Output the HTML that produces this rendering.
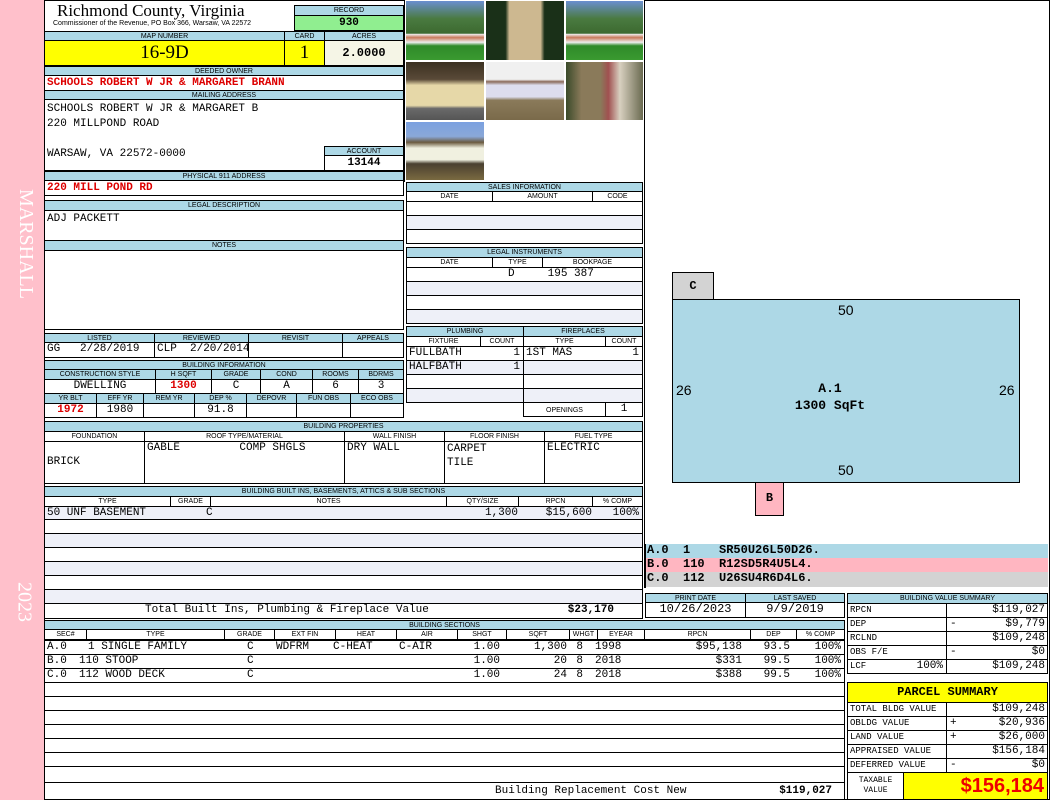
<!DOCTYPE html><html><head><style>
body{margin:0;width:1050px;height:800px;position:relative;background:#fff;overflow:hidden;font-family:"Liberation Mono",monospace}
div{position:absolute;box-sizing:border-box}
.b{border:1px solid #000;overflow:hidden;white-space:nowrap}
.h{background:#add8e6;font:7px/1 "Liberation Sans",sans-serif;text-align:center;padding-top:1px;border:1px solid #000;white-space:nowrap;overflow:hidden}
.w{background:#fff;font-size:11px;line-height:13px;padding:0 2px}
.g{background:#eef0f8}
.r{text-align:right}.c{text-align:center}
.red{color:#d00;font-weight:bold}
.ph{overflow:hidden;border:1px solid #fff}
.s{position:absolute;top:0}
.sr{position:absolute;top:0;text-align:right}
</style></head><body>
<div style="left:0;top:0;width:44px;height:800px;background:#ffc0cb"></div>
<div style="left:10px;top:175px;width:26px;height:140px;"><div style="left:-56px;top:56px;width:140px;height:26px;transform:rotate(90deg);color:#fff;font:20px 'Liberation Serif',serif;text-align:center">MARSHALL</div></div>
<div style="left:10px;top:575px;width:26px;height:55px;"><div style="left:-15px;top:14px;width:55px;height:26px;transform:rotate(90deg);color:#fff;font:20px 'Liberation Serif',serif;text-align:center">2023</div></div>
<div style="left:44px;top:0;width:1006px;height:800px;border:1px solid #000"></div>

<div style="left:57px;top:1px;font:17px 'Liberation Serif',serif">Richmond County, Virginia</div>
<div style="left:53px;top:20px;font:7px 'Liberation Sans',sans-serif">Commissioner of the Revenue, PO Box 366, Warsaw, VA 22572</div>
<div class="h" style="left:294px;top:5px;width:110px;height:11px">RECORD</div>
<div class="b c" style="left:294px;top:15px;width:110px;height:16px;background:#90ee90;font:bold 11px/14px 'Liberation Mono'">930</div>
<div class="h" style="left:44px;top:31px;width:241px;height:10px">MAP NUMBER</div>
<div class="h" style="left:284px;top:31px;width:41px;height:10px">CARD</div>
<div class="h" style="left:324px;top:31px;width:80px;height:10px">ACRES</div>
<div class="b c" style="left:44px;top:40px;width:241px;height:26px;background:#ff0;font:19px/24px 'Liberation Serif',serif">16-9D</div>
<div class="b c" style="left:284px;top:40px;width:41px;height:26px;background:#ff0;font:19px/24px 'Liberation Serif',serif">1</div>
<div class="b c" style="left:324px;top:40px;width:80px;height:26px;background:#f5f5e6;font:bold 12px/24px 'Liberation Mono'">2.0000</div>
<div class="h" style="left:44px;top:66px;width:360px;height:10px">DEEDED OWNER</div>
<div class="b w red" style="left:44px;top:75px;width:360px;height:16px;line-height:15px">SCHOOLS ROBERT W JR &amp; MARGARET BRANN</div>
<div class="h" style="left:44px;top:90px;width:360px;height:10px">MAILING ADDRESS</div>
<div class="b w" style="left:44px;top:99px;width:360px;height:72px;line-height:15px;white-space:pre;padding-top:2px">SCHOOLS ROBERT W JR &amp; MARGARET B
220 MILLPOND ROAD

WARSAW, VA 22572-0000</div>
<div class="h" style="left:324px;top:146px;width:80px;height:10px">ACCOUNT</div>
<div class="b c" style="left:324px;top:155px;width:80px;height:16px;font:bold 11px/14px 'Liberation Mono'">13144</div>
<div class="h" style="left:44px;top:171px;width:360px;height:10px">PHYSICAL 911 ADDRESS</div>
<div class="b w red" style="left:44px;top:180px;width:360px;height:16px;line-height:15px">220 MILL POND RD</div>
<div class="h" style="left:44px;top:200px;width:360px;height:11px">LEGAL DESCRIPTION</div>
<div class="b w" style="left:44px;top:210px;width:360px;height:31px;padding-top:2px">ADJ PACKETT</div>
<div class="h" style="left:44px;top:240px;width:360px;height:11px">NOTES</div>
<div class="b" style="left:44px;top:250px;width:360px;height:80px"></div>

<div class="h" style="left:44px;top:333px;width:111px;height:10px">LISTED</div>
<div class="h" style="left:154px;top:333px;width:95px;height:10px">REVIEWED</div>
<div class="h" style="left:248px;top:333px;width:95px;height:10px">REVISIT</div>
<div class="h" style="left:342px;top:333px;width:62px;height:10px">APPEALS</div>
<div class="b w" style="left:44px;top:342px;width:111px;height:16px">GG&nbsp;&nbsp;&nbsp;2/28/2019</div>
<div class="b w" style="left:154px;top:342px;width:95px;height:16px">CLP&nbsp;&nbsp;2/20/2014</div>
<div class="b w" style="left:248px;top:342px;width:95px;height:16px"></div>
<div class="b w" style="left:342px;top:342px;width:62px;height:16px"></div>

<div class="h" style="left:44px;top:360px;width:360px;height:10px">BUILDING INFORMATION</div>
<div class="h" style="left:44px;top:369px;width:112px;height:11px">CONSTRUCTION STYLE</div>
<div class="h" style="left:155px;top:369px;width:57px;height:11px">H SQFT</div>
<div class="h" style="left:211px;top:369px;width:50px;height:11px">GRADE</div>
<div class="h" style="left:260px;top:369px;width:53px;height:11px">COND</div>
<div class="h" style="left:312px;top:369px;width:47px;height:11px">ROOMS</div>
<div class="h" style="left:358px;top:369px;width:46px;height:11px">BDRMS</div>
<div class="b w c" style="left:44px;top:379px;width:112px;height:15px">DWELLING</div>
<div class="b w c red" style="left:155px;top:379px;width:57px;height:15px">1300</div>
<div class="b w c" style="left:211px;top:379px;width:50px;height:15px">C</div>
<div class="b w c" style="left:260px;top:379px;width:53px;height:15px">A</div>
<div class="b w c" style="left:312px;top:379px;width:47px;height:15px">6</div>
<div class="b w c" style="left:358px;top:379px;width:46px;height:15px">3</div>
<div class="h" style="left:44px;top:393px;width:53px;height:11px">YR BLT</div>
<div class="h" style="left:96px;top:393px;width:48px;height:11px">EFF YR</div>
<div class="h" style="left:143px;top:393px;width:52px;height:11px">REM YR</div>
<div class="h" style="left:194px;top:393px;width:53px;height:11px">DEP %</div>
<div class="h" style="left:246px;top:393px;width:51px;height:11px">DEPOVR</div>
<div class="h" style="left:296px;top:393px;width:55px;height:11px">FUN OBS</div>
<div class="h" style="left:350px;top:393px;width:54px;height:11px">ECO OBS</div>
<div class="b w c red" style="left:44px;top:403px;width:53px;height:15px">1972</div>
<div class="b w c" style="left:96px;top:403px;width:48px;height:15px">1980</div>
<div class="b w" style="left:143px;top:403px;width:52px;height:15px"></div>
<div class="b w c" style="left:194px;top:403px;width:53px;height:15px">91.8</div>
<div class="b w" style="left:246px;top:403px;width:51px;height:15px"></div>
<div class="b w" style="left:296px;top:403px;width:55px;height:15px"></div>
<div class="b w" style="left:350px;top:403px;width:54px;height:15px"></div>

<!-- photos -->
<div class="ph" style="left:405px;top:0;width:80px;height:61px;background:linear-gradient(#6a8fd0 0,#4a7a40 30%,#3c6a30 55%,#eee 56%,#c87a5a 62%,#eee 70%,#2f8a2a 76%,#3a9a30)"></div>
<div class="ph" style="left:485px;top:0;width:80px;height:61px;background:linear-gradient(90deg,#1a3018 0,#1a3018 25%,#cdb890 30%,#cdb890 70%,#1a3018 75%);"></div>
<div class="ph" style="left:565px;top:0;width:79px;height:61px;background:linear-gradient(#6a8fd0 0,#4a7a40 30%,#3c6a30 55%,#eee 56%,#c87a5a 62%,#eee 70%,#2f8a2a 76%,#3a9a30)"></div>
<div class="ph" style="left:405px;top:61px;width:80px;height:60px;background:linear-gradient(#3a3020 0,#5a4a38 30%,#e6d8a8 40%,#e6d8a8 75%,#6a6a6a 80%,#555)"></div>
<div class="ph" style="left:485px;top:61px;width:80px;height:60px;background:linear-gradient(#f0f0f0 0,#f0f0f0 30%,#8a6a5a 34%,#dde 40%,#dde 60%,#8a7a5a 66%,#7a6a4a)"></div>
<div class="ph" style="left:565px;top:61px;width:79px;height:60px;background:linear-gradient(90deg,#3a4a2a,#8a7a5a 20%,#8a7a5a 45%,#a05050 55%,#d8d0c0 70%,#6a6a50)"></div>
<div class="ph" style="left:405px;top:121px;width:80px;height:60px;background:linear-gradient(#7aa0e0 0,#8aa8d8 25%,#6a5a40 35%,#f0f0e0 45%,#f0f0e0 65%,#4a4030 72%,#7a6a40)"></div>
<div style="left:404px;top:0;width:1px;height:182px;background:#000"></div>
<div style="left:644px;top:0;width:1px;height:545px;background:#000"></div>

<!-- sales -->
<div class="h" style="left:406px;top:182px;width:237px;height:10px">SALES INFORMATION</div>
<div class="h" style="left:406px;top:191px;width:87px;height:11px;background:#fff">DATE</div>
<div class="h" style="left:492px;top:191px;width:101px;height:11px;background:#fff">AMOUNT</div>
<div class="h" style="left:592px;top:191px;width:51px;height:11px;background:#fff">CODE</div>
<div class="b" style="left:406px;top:201px;width:237px;height:15px"></div>
<div class="b g" style="left:406px;top:215px;width:237px;height:15px"></div>
<div class="b" style="left:406px;top:229px;width:237px;height:15px"></div>
<div class="h" style="left:406px;top:247px;width:237px;height:11px">LEGAL INSTRUMENTS</div>
<div class="h" style="left:406px;top:257px;width:87px;height:11px;background:#fff">DATE</div>
<div class="h" style="left:492px;top:257px;width:51px;height:11px;background:#fff">TYPE</div>
<div class="h" style="left:542px;top:257px;width:101px;height:11px;background:#fff">BOOKPAGE</div>
<div class="b w" style="left:406px;top:267px;width:237px;height:15px;white-space:pre">               D     195 387</div>
<div class="b g" style="left:406px;top:281px;width:237px;height:15px"></div>
<div class="b" style="left:406px;top:295px;width:237px;height:15px"></div>
<div class="b g" style="left:406px;top:309px;width:237px;height:15px"></div>

<!-- plumbing -->
<div class="h" style="left:406px;top:326px;width:118px;height:11px">PLUMBING</div>
<div class="h" style="left:523px;top:326px;width:120px;height:11px">FIREPLACES</div>
<div class="h" style="left:406px;top:336px;width:75px;height:11px;background:#fff">FIXTURE</div>
<div class="h" style="left:480px;top:336px;width:44px;height:11px;background:#fff">COUNT</div>
<div class="h" style="left:523px;top:336px;width:83px;height:11px;background:#fff">TYPE</div>
<div class="h" style="left:605px;top:336px;width:38px;height:11px;background:#fff">COUNT</div>
<div class="b w" style="left:406px;top:346px;width:118px;height:15px">FULLBATH<span style="position:absolute;right:3px">1</span></div>
<div class="b w" style="left:523px;top:346px;width:120px;height:15px">1ST MAS<span style="position:absolute;right:3px">1</span></div>
<div class="b w g" style="left:406px;top:360px;width:118px;height:15px">HALFBATH<span style="position:absolute;right:3px">1</span></div>
<div class="b g" style="left:523px;top:360px;width:120px;height:15px"></div>
<div class="b" style="left:406px;top:374px;width:118px;height:15px"></div>
<div class="b" style="left:523px;top:374px;width:120px;height:15px"></div>
<div class="b g" style="left:406px;top:388px;width:118px;height:15px"></div>
<div class="b g" style="left:523px;top:388px;width:120px;height:15px"></div>
<div class="h" style="left:523px;top:402px;width:83px;height:15px;background:#fff;padding-top:4px">OPENINGS</div>
<div class="b w c" style="left:605px;top:402px;width:38px;height:15px">1</div>

<!-- properties -->
<div class="h" style="left:44px;top:421px;width:599px;height:11px">BUILDING PROPERTIES</div>
<div class="h" style="left:44px;top:431px;width:101px;height:11px;background:#fff">FOUNDATION</div>
<div class="h" style="left:144px;top:431px;width:201px;height:11px;background:#fff">ROOF TYPE/MATERIAL</div>
<div class="h" style="left:344px;top:431px;width:101px;height:11px;background:#fff">WALL FINISH</div>
<div class="h" style="left:444px;top:431px;width:101px;height:11px;background:#fff">FLOOR FINISH</div>
<div class="h" style="left:544px;top:431px;width:99px;height:11px;background:#fff">FUEL TYPE</div>
<div class="b w" style="left:44px;top:441px;width:101px;height:43px;padding-top:14px">BRICK</div>
<div class="b w" style="left:144px;top:441px;width:201px;height:43px;white-space:pre">GABLE         COMP SHGLS</div>
<div class="b w" style="left:344px;top:441px;width:101px;height:43px">DRY WALL</div>
<div class="b w" style="left:444px;top:441px;width:101px;height:43px;line-height:14px">CARPET<br>TILE</div>
<div class="b w" style="left:544px;top:441px;width:99px;height:43px">ELECTRIC</div>

<!-- built ins -->
<div class="h" style="left:44px;top:486px;width:599px;height:11px">BUILDING BUILT INS, BASEMENTS, ATTICS &amp; SUB SECTIONS</div>
<div class="h" style="left:44px;top:496px;width:127px;height:11px;background:#fff">TYPE</div>
<div class="h" style="left:170px;top:496px;width:41px;height:11px;background:#fff">GRADE</div>
<div class="h" style="left:210px;top:496px;width:237px;height:11px;background:#fff">NOTES</div>
<div class="h" style="left:446px;top:496px;width:73px;height:11px;background:#fff">QTY/SIZE</div>
<div class="h" style="left:518px;top:496px;width:75px;height:11px;background:#fff">RPCN</div>
<div class="h" style="left:592px;top:496px;width:51px;height:11px;background:#fff">% COMP</div>
<div class="b w g" style="left:44px;top:506px;width:599px;height:14px">50 UNF BASEMENT<span class="s" style="left:161px">C</span><span class="sr" style="right:124px">1,300</span><span class="sr" style="right:50px">$15,600</span><span class="sr" style="right:3px">100%</span></div>
<div class="b" style="left:44px;top:519px;width:599px;height:15px"></div>
<div class="b g" style="left:44px;top:533px;width:599px;height:15px"></div>
<div class="b" style="left:44px;top:547px;width:599px;height:15px"></div>
<div class="b g" style="left:44px;top:561px;width:599px;height:15px"></div>
<div class="b" style="left:44px;top:575px;width:599px;height:15px"></div>
<div class="b g" style="left:44px;top:589px;width:599px;height:15px"></div>
<div class="b w" style="left:44px;top:603px;width:599px;height:16px;padding-left:100px">Total Built Ins, Plumbing &amp; Fireplace Value<b style="position:absolute;right:28px">$23,170</b></div>

<!-- sketch -->
<div style="left:672px;top:272px;width:42px;height:28px;background:#d3d3d3;border:1px solid #000;font:bold 12px/26px 'Liberation Mono';text-align:center">C</div>
<div style="left:672px;top:299px;width:348px;height:184px;background:#add8e6;border:1px solid #000"></div>
<div style="left:755px;top:482px;width:29px;height:34px;background:#ffb6c1;border:1px solid #000;font:bold 12px/30px 'Liberation Mono';text-align:center">B</div>
<div style="left:838px;top:302px;font:14px 'Liberation Sans'">50</div>
<div style="left:838px;top:462px;font:14px 'Liberation Sans'">50</div>
<div style="left:676px;top:382px;font:14px 'Liberation Sans'">26</div>
<div style="left:999px;top:382px;font:14px 'Liberation Sans'">26</div>
<div style="left:760px;top:380px;width:140px;text-align:center;font:bold 13px/17px 'Liberation Mono'">A.1<br>1300 SqFt</div>

<div class="w" style="left:645px;top:544px;width:403px;height:15px;background:#add8e6;font-weight:bold;font-size:12px;white-space:pre">A.0  1    SR50U26L50D26.</div>
<div class="w" style="left:645px;top:558px;width:403px;height:15px;background:#ffb6c1;font-weight:bold;font-size:12px;white-space:pre">B.0  110  R12SD5R4U5L4.</div>
<div class="w" style="left:645px;top:572px;width:403px;height:15px;background:#d3d3d3;font-weight:bold;font-size:12px;white-space:pre">C.0  112  U26SU4R6D4L6.</div>
<div style="left:644px;top:544px;width:2px;height:44px;background:#000"></div>

<div class="h" style="left:645px;top:593px;width:101px;height:10px">PRINT DATE</div>
<div class="h" style="left:745px;top:593px;width:100px;height:10px">LAST SAVED</div>
<div class="b w c" style="left:645px;top:602px;width:101px;height:16px;font-size:12px">10/26/2023</div>
<div class="b w c" style="left:745px;top:602px;width:100px;height:16px;font-size:12px">9/9/2019</div>

<!-- sections -->
<div class="h" style="left:44px;top:620px;width:801px;height:10px">BUILDING SECTIONS</div>
<div class="h" style="left:44px;top:629px;width:43px;height:11px;background:#fff">SEC#</div>
<div class="h" style="left:86px;top:629px;width:139px;height:11px;background:#fff">TYPE</div>
<div class="h" style="left:224px;top:629px;width:51px;height:11px;background:#fff">GRADE</div>
<div class="h" style="left:274px;top:629px;width:62px;height:11px;background:#fff">EXT FIN</div>
<div class="h" style="left:335px;top:629px;width:62px;height:11px;background:#fff">HEAT</div>
<div class="h" style="left:396px;top:629px;width:62px;height:11px;background:#fff">AIR</div>
<div class="h" style="left:457px;top:629px;width:50px;height:11px;background:#fff">SHGT</div>
<div class="h" style="left:506px;top:629px;width:64px;height:11px;background:#fff">SQFT</div>
<div class="h" style="left:569px;top:629px;width:29px;height:11px;background:#fff">WHGT</div>
<div class="h" style="left:597px;top:629px;width:48px;height:11px;background:#fff">EYEAR</div>
<div class="h" style="left:644px;top:629px;width:107px;height:11px;background:#fff">RPCN</div>
<div class="h" style="left:750px;top:629px;width:47px;height:11px;background:#fff">DEP</div>
<div class="h" style="left:796px;top:629px;width:49px;height:11px;background:#fff">% COMP</div>
<div class="b w" style="left:44px;top:640px;width:801px;height:15px">A.0<span class="s" style="left:43px">1 SINGLE FAMILY</span><span class="s" style="left:202px">C</span><span class="s" style="left:231px">WDFRM</span><span class="s" style="left:288px">C-HEAT</span><span class="s" style="left:354px">C-AIR</span><span class="sr" style="right:344px">1.00</span><span class="sr" style="right:277px">1,300</span><span class="sr" style="right:261px">8</span><span class="s" style="left:550px">1998</span><span class="sr" style="right:102px">$95,138</span><span class="sr" style="right:54px">93.5</span><span class="sr" style="right:3px">100%</span></div>
<div class="b w" style="left:44px;top:654px;width:801px;height:15px">B.0<span class="s" style="left:34px">110 STOOP</span><span class="s" style="left:202px">C</span><span class="sr" style="right:344px">1.00</span><span class="sr" style="right:277px">20</span><span class="sr" style="right:261px">8</span><span class="s" style="left:550px">2018</span><span class="sr" style="right:102px">$331</span><span class="sr" style="right:54px">99.5</span><span class="sr" style="right:3px">100%</span></div>
<div class="b w" style="left:44px;top:668px;width:801px;height:15px">C.0<span class="s" style="left:34px">112 WOOD DECK</span><span class="s" style="left:202px">C</span><span class="sr" style="right:344px">1.00</span><span class="sr" style="right:277px">24</span><span class="sr" style="right:261px">8</span><span class="s" style="left:550px">2018</span><span class="sr" style="right:102px">$388</span><span class="sr" style="right:54px">99.5</span><span class="sr" style="right:3px">100%</span></div>
<div class="b" style="left:44px;top:682px;width:801px;height:15px"></div>
<div class="b" style="left:44px;top:696px;width:801px;height:15px"></div>
<div class="b" style="left:44px;top:710px;width:801px;height:15px"></div>
<div class="b" style="left:44px;top:724px;width:801px;height:15px"></div>
<div class="b" style="left:44px;top:738px;width:801px;height:15px"></div>
<div class="b" style="left:44px;top:752px;width:801px;height:15px"></div>
<div class="b" style="left:44px;top:766px;width:801px;height:17px"></div>
<div class="b w" style="left:44px;top:782px;width:801px;height:18px;padding-left:450px;line-height:17px">Building Replacement Cost New<b style="position:absolute;right:12px">$119,027</b></div>

<!-- value summary -->
<div class="h" style="left:847px;top:593px;width:201px;height:11px">BUILDING VALUE SUMMARY</div>
<div class="b w" style="left:847px;top:603px;width:100px;height:15px;font-size:9px">RPCN</div><div class="b w r" style="left:946px;top:603px;width:102px;height:15px">$119,027</div>
<div class="b w" style="left:847px;top:617px;width:100px;height:15px;font-size:9px">DEP</div><div class="b w r" style="left:946px;top:617px;width:102px;height:15px"><span style="position:absolute;left:3px">-</span>$9,779</div>
<div class="b w" style="left:847px;top:631px;width:100px;height:15px;font-size:9px">RCLND</div><div class="b w r" style="left:946px;top:631px;width:102px;height:15px">$109,248</div>
<div class="b w" style="left:847px;top:645px;width:100px;height:15px;font-size:9px">OBS F/E</div><div class="b w r" style="left:946px;top:645px;width:102px;height:15px"><span style="position:absolute;left:3px">-</span>$0</div>
<div class="b w" style="left:847px;top:659px;width:100px;height:15px;font-size:9px">LCF<span style="position:absolute;right:3px;font-size:11px">100%</span></div><div class="b w r" style="left:946px;top:659px;width:102px;height:15px">$109,248</div>

<div class="b c" style="left:847px;top:682px;width:201px;height:21px;background:#ff0;font:bold 12px/19px 'Liberation Mono'">PARCEL SUMMARY</div>
<div class="b w" style="left:847px;top:702px;width:100px;height:15px;font-size:9px">TOTAL BLDG VALUE</div><div class="b w r" style="left:946px;top:702px;width:102px;height:15px">$109,248</div>
<div class="b w" style="left:847px;top:716px;width:100px;height:15px;font-size:9px">OBLDG VALUE</div><div class="b w r" style="left:946px;top:716px;width:102px;height:15px"><span style="position:absolute;left:3px">+</span>$20,936</div>
<div class="b w" style="left:847px;top:730px;width:100px;height:15px;font-size:9px">LAND VALUE</div><div class="b w r" style="left:946px;top:730px;width:102px;height:15px"><span style="position:absolute;left:3px">+</span>$26,000</div>
<div class="b w" style="left:847px;top:744px;width:100px;height:15px;font-size:9px">APPRAISED VALUE</div><div class="b w r" style="left:946px;top:744px;width:102px;height:15px">$156,184</div>
<div class="b w" style="left:847px;top:758px;width:100px;height:15px;font-size:9px">DEFERRED VALUE</div><div class="b w r" style="left:946px;top:758px;width:102px;height:15px"><span style="position:absolute;left:3px">-</span>$0</div>
<div class="b c" style="left:847px;top:772px;width:57px;height:28px;font:8px/10px 'Liberation Mono';padding-top:3px">TAXABLE<br>VALUE</div>
<div class="b r" style="left:903px;top:772px;width:145px;height:28px;background:#ff0;color:#e00;font:bold 20px/26px 'Liberation Sans',sans-serif;padding-right:3px">$156,184</div>
</body></html>
